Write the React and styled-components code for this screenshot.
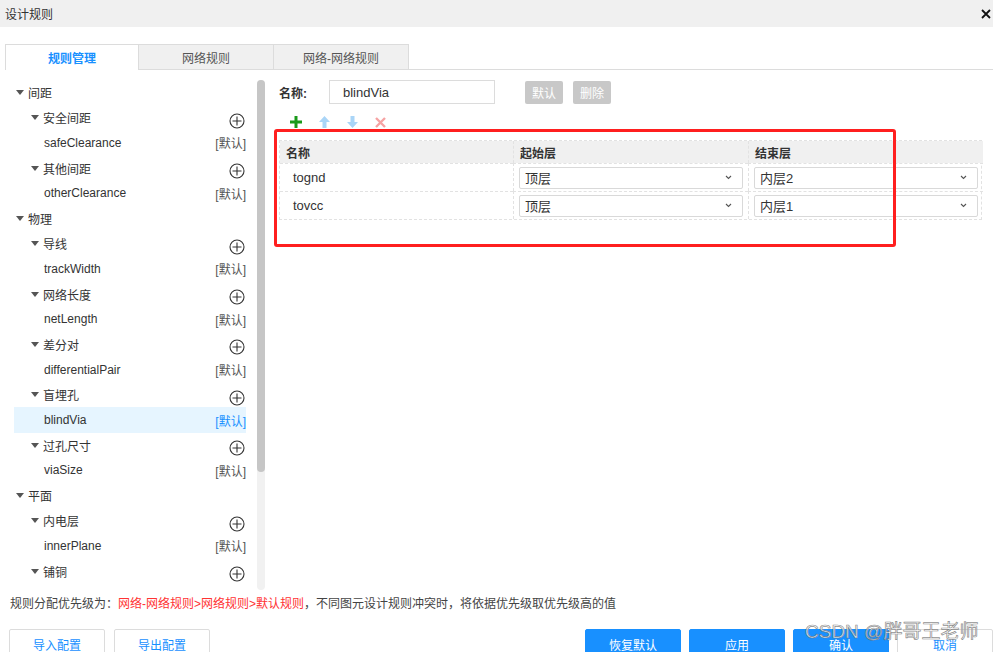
import React from "react";
import styled, { createGlobalStyle } from "styled-components";

const GlobalStyle = createGlobalStyle`
  html, body {
    margin: 0;
    padding: 0;
    background: #fff;
    overflow: hidden;
  }
  body {
    font-family: "Liberation Sans", "Noto Sans CJK SC", sans-serif;
    color: #333;
  }
  * {
    box-sizing: border-box;
  }
`;

const Window = styled.div`
  position: relative;
  width: 993px;
  height: 652px;
  overflow: hidden;
  background: #fff;
`;

const TitleBar = styled.div`
  height: 27px;
  background: #f0f0f0;
  display: flex;
  align-items: center;
  justify-content: space-between;
  padding: 0 1px 0 5px;
  font-size: 12px;
  color: #333;
`;

const Body = styled.div`
  padding: 17px 0 0 5px;
`;

const TabBar = styled.div`
  display: flex;
  height: 26px;
  border-bottom: 1px solid #dcdcdc;
`;

const Tab = styled.div`
  width: ${(p) => p.w}px;
  height: ${(p) => (p.active ? 26 : 25)}px;
  border: 1px solid #dcdcdc;
  border-bottom: none;
  border-left: ${(p) => (p.first ? "1px solid #dcdcdc" : "none")};
  background: ${(p) => (p.active ? "#fff" : "#f0f0f0")};
  color: ${(p) => (p.active ? "#1890ff" : "#555")};
  font-weight: ${(p) => (p.active ? 600 : 400)};
  font-size: 12px;
  display: flex;
  align-items: center;
  justify-content: center;
`;

const Main = styled.div`
  display: flex;
  height: 520px;
`;

const Tree = styled.div`
  width: 241px;
  padding: 10px 0 0 9px;
`;

const TreeRow = styled.div`
  height: 25.2px;
  display: flex;
  align-items: center;
  padding-left: ${(p) => [2, 17, 30][p.level]}px;
  background: ${(p) => (p.selected ? "#e6f5ff" : "transparent")};
  font-size: 12px;
  color: #333;
`;

const Caret = styled.span`
  width: 0;
  height: 0;
  border-left: 4px solid transparent;
  border-right: 4px solid transparent;
  border-top: 5px solid #555;
  margin-right: 4px;
`;

const RowLabel = styled.span`
  flex: 1;
`;

const DefaultTag = styled.span`
  color: ${(p) => (p.selected ? "#1890ff" : "#555")};
`;

const AddIcon = styled.svg`
  margin-top: 6px;
  margin-right: 1px;
`;

const Scrollbar = styled.div`
  width: 8px;
  margin: 10px 0 0 11px;
  background: #f1f1f1;
  border-radius: 4px;
`;

const Thumb = styled.div`
  height: 392px;
  background: #c6c6c6;
  border-radius: 4px;
`;

const Panel = styled.div`
  flex: 1;
  padding: 10px 10px 0 14px;
`;

const NameRow = styled.div`
  display: flex;
  align-items: center;
  height: 24px;
`;

const NameLabel = styled.span`
  font-size: 12px;
  font-weight: 700;
  color: #333;
  width: 50px;
`;

const NameInput = styled.div`
  width: 166px;
  height: 24px;
  border: 1px solid #dcdcdc;
  padding-left: 13px;
  font-size: 13px;
  display: flex;
  align-items: center;
  color: #333;
`;

const GrayButton = styled.div`
  width: 38px;
  height: 23px;
  margin-left: ${(p) => p.ml}px;
  background: #c8c8c8;
  color: #fff;
  font-size: 12px;
  border-radius: 2px;
  display: flex;
  align-items: center;
  justify-content: center;
`;

const Toolbar = styled.div`
  display: flex;
  align-items: center;
  height: 18px;
  margin: 9px 0 0 10px;
  gap: 15px;
`;

const Table = styled.div`
  margin-top: 9px;
  width: 703px;
  display: grid;
  grid-template-columns: 233px 235px 235px;
  border: 1px dashed #e2e2e2;
`;

const HeadCell = styled.div`
  height: 22px;
  background: #f0f0f0;
  font-size: 12px;
  font-weight: 700;
  color: #333;
  padding-left: 6px;
  display: flex;
  align-items: center;
  border-left: ${(p) => (p.first ? "none" : "1px dashed #e2e2e2")};
`;

const Cell = styled.div`
  height: 28px;
  display: flex;
  align-items: center;
  padding: 0 5px 0 ${(p) => (p.text ? 13 : 5)}px;
  font-size: 13px;
  color: #333;
  border-top: 1px dashed #e2e2e2;
  border-left: ${(p) => (p.first ? "none" : "1px dashed #e2e2e2")};
`;

const Select = styled.div`
  flex: 1;
  height: 22px;
  border: 1px solid #d9d9d9;
  border-radius: 2px;
  display: flex;
  align-items: center;
  justify-content: space-between;
  padding: 0 10px 0 5px;
  font-size: 13px;
  color: #333;
`;

const Note = styled.div`
  margin-top: 6px;
  padding-left: 5px;
  height: 16px;
  line-height: 16px;
  font-size: 12px;
  color: #444;
`;

const Red = styled.span`
  color: #ff3333;
`;

const Footer = styled.div`
  margin-top: 17px;
  display: flex;
  justify-content: space-between;
  padding-left: 4px;
`;

const ButtonGroup = styled.div`
  display: flex;
  gap: ${(p) => p.gap}px;
`;

const Button = styled.div`
  width: 96px;
  height: 30px;
  border-radius: 2px;
  font-size: 12px;
  display: flex;
  align-items: center;
  justify-content: center;
  border: 1px solid ${(p) => (p.primary ? "#1890ff" : "#dcdcdc")};
  background: ${(p) => (p.primary ? "#1890ff" : "#fff")};
  color: ${(p) => (p.primary ? "#fff" : "#1890ff")};
`;

const Highlight = styled.div`
  position: absolute;
  left: 274px;
  top: 129px;
  width: 622px;
  height: 118px;
  border: 3px solid #ff1f1f;
  border-radius: 3px;
  pointer-events: none;
`;

const Watermark = styled.div`
  position: absolute;
  left: 805px;
  top: 620px;
  font-size: 19px;
  line-height: 24px;
  font-family: "Liberation Sans", "Noto Sans CJK SC", sans-serif;
  color: rgba(255, 255, 255, 0.75);
  -webkit-text-stroke: 0.7px rgba(110, 110, 110, 0.8);
  white-space: nowrap;
  pointer-events: none;
`;

const tree = [
  { level: 0, label: "间距" },
  { level: 1, label: "安全间距", add: true },
  { level: 2, label: "safeClearance" },
  { level: 1, label: "其他间距", add: true },
  { level: 2, label: "otherClearance" },
  { level: 0, label: "物理" },
  { level: 1, label: "导线", add: true },
  { level: 2, label: "trackWidth" },
  { level: 1, label: "网络长度", add: true },
  { level: 2, label: "netLength" },
  { level: 1, label: "差分对", add: true },
  { level: 2, label: "differentialPair" },
  { level: 1, label: "盲埋孔", add: true },
  { level: 2, label: "blindVia", selected: true },
  { level: 1, label: "过孔尺寸", add: true },
  { level: 2, label: "viaSize" },
  { level: 0, label: "平面" },
  { level: 1, label: "内电层", add: true },
  { level: 2, label: "innerPlane" },
  { level: 1, label: "铺铜", add: true },
];

const rows = [
  { name: "tognd", start: "顶层", end: "内层2" },
  { name: "tovcc", start: "顶层", end: "内层1" },
];

const CirclePlus = () => (
  <AddIcon width="16" height="16" viewBox="0 0 16 16">
    <circle cx="8" cy="8" r="7" fill="none" stroke="#333" strokeWidth="1.1" />
    <path d="M8 3.5v9M3.5 8h9" stroke="#333" strokeWidth="1.1" />
  </AddIcon>
);

const Chevron = () => (
  <svg width="7" height="5" viewBox="0 0 7 5">
    <path d="M1 1l2.5 2.5L6 1" fill="none" stroke="#555" strokeWidth="1.1" />
  </svg>
);

const CloseIcon = () => (
  <svg width="12" height="12" viewBox="0 0 12 12">
    <path d="M2 2l8 8M10 2l-8 8" stroke="#111" strokeWidth="1.8" />
  </svg>
);

const PlusIcon = () => (
  <svg width="14" height="14" viewBox="0 0 14 14">
    <path d="M7 1v12M1 7h12" stroke="#1a9a1a" strokeWidth="3" />
  </svg>
);

const ArrowIcon = ({ down }) => (
  <svg
    width="13"
    height="14"
    viewBox="0 0 13 14"
    style={{ transform: down ? "rotate(180deg)" : "none" }}
  >
    <path d="M6.5 1L12 7H8.5v6h-4V7H1z" fill="#aad5f7" />
  </svg>
);

const DeleteIcon = () => (
  <svg width="13" height="13" viewBox="0 0 13 13">
    <path d="M2 2l9 9M11 2l-9 9" stroke="#f6a3a3" strokeWidth="2.4" />
  </svg>
);

export default function App() {
  return (
    <Window>
      <GlobalStyle />
      <TitleBar>
        <span>设计规则</span>
        <CloseIcon />
      </TitleBar>
      <Body>
        <TabBar>
          <Tab w={134} first active>
            规则管理
          </Tab>
          <Tab w={135}>网络规则</Tab>
          <Tab w={135}>网络-网络规则</Tab>
        </TabBar>
        <Main>
          <Tree>
            {tree.map((node) => (
              <TreeRow key={node.label} level={node.level} selected={node.selected}>
                {node.level < 2 && <Caret />}
                <RowLabel>{node.label}</RowLabel>
                {node.add && <CirclePlus />}
                {node.level === 2 && (
                  <DefaultTag selected={node.selected}>[默认]</DefaultTag>
                )}
              </TreeRow>
            ))}
          </Tree>
          <Scrollbar>
            <Thumb />
          </Scrollbar>
          <Panel>
            <NameRow>
              <NameLabel>名称:</NameLabel>
              <NameInput>blindVia</NameInput>
              <GrayButton ml={30}>默认</GrayButton>
              <GrayButton ml={10}>删除</GrayButton>
            </NameRow>
            <Toolbar>
              <PlusIcon />
              <ArrowIcon />
              <ArrowIcon down />
              <DeleteIcon />
            </Toolbar>
            <Table>
              <HeadCell first>名称</HeadCell>
              <HeadCell>起始层</HeadCell>
              <HeadCell>结束层</HeadCell>
              {rows.map((r) => (
                <React.Fragment key={r.name}>
                  <Cell first text>
                    {r.name}
                  </Cell>
                  <Cell>
                    <Select>
                      {r.start}
                      <Chevron />
                    </Select>
                  </Cell>
                  <Cell>
                    <Select>
                      {r.end}
                      <Chevron />
                    </Select>
                  </Cell>
                </React.Fragment>
              ))}
            </Table>
          </Panel>
        </Main>
        <Note>
          规则分配优先级为：<Red>网络-网络规则&gt;网络规则&gt;默认规则</Red>
          ，不同图元设计规则冲突时，将依据优先级取优先级高的值
        </Note>
        <Footer>
          <ButtonGroup gap={9}>
            <Button>导入配置</Button>
            <Button>导出配置</Button>
          </ButtonGroup>
          <ButtonGroup gap={8}>
            <Button primary>恢复默认</Button>
            <Button primary>应用</Button>
            <Button primary>确认</Button>
            <Button>取消</Button>
          </ButtonGroup>
        </Footer>
      </Body>
      <Highlight />
      <Watermark>CSDN @胖哥王老师</Watermark>
    </Window>
  );
}
